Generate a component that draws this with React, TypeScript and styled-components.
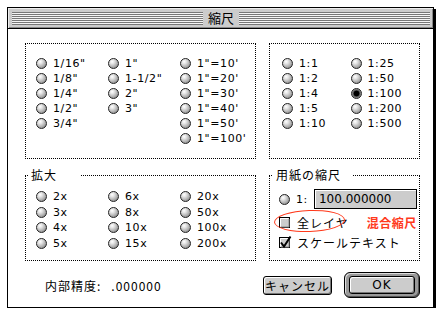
import styled, { createGlobalStyle } from "styled-components";

const GlobalStyle = createGlobalStyle`
  body {
    margin: 0;
    background: #fff;
  }
`;

const LATIN = `"DejaVu Sans", "Noto Sans CJK JP", sans-serif`;
const JP = `"Noto Sans CJK JP", sans-serif`;

const Page = styled.div`
  padding: 7px 0 0 7px;
`;

// the dialog window, black frame with a drop shadow
const Window = styled.div`
  box-sizing: border-box;
  width: 427px;
  height: 301px;
  border: 1px solid #000;
  box-shadow: 2px 2px 0 #000;
  background: #fff;
  display: flex;
  flex-direction: column;
`;

const TitleBar = styled.div`
  box-sizing: border-box;
  height: 21px;
  background: #cccccc;
  border-bottom: 1px solid #000;
  box-shadow: inset 1px 1px 0 #eee, inset -1px -1px 0 #888;
  display: flex;
  align-items: center;
  padding: 0 3px 0 4px;
`;

const Stripes = styled.div`
  flex: 1;
  height: 13px;
  background: repeating-linear-gradient(to bottom, #777 0 1px, #f4f4f4 1px 2px);
`;

const Title = styled.div`
  padding: 0 5px;
  font: 13px/20px ${JP};
  color: #000;
`;

const Body = styled.div`
  flex: 1;
  display: flex;
  flex-direction: column;
  padding: 14px 13px 0 17px;
`;

const Row = styled.div<{ $h: number; $mt?: number }>`
  display: flex;
  gap: 13px;
  height: ${p => p.$h}px;
  margin-top: ${p => p.$mt ?? 0}px;
`;

const Group = styled.div<{ $w: number; $pt: number; $pl: number }>`
  box-sizing: border-box;
  position: relative;
  width: ${p => p.$w}px;
  height: 100%;
  border: 1px dotted #000;
  padding: ${p => p.$pt}px 0 0 ${p => p.$pl}px;
`;

// group title sitting over the dotted frame
const Legend = styled.div<{ $w: number; $pl: number }>`
  position: absolute;
  top: -9px;
  left: 3px;
  width: ${p => p.$w}px;
  padding-left: ${p => p.$pl}px;
  box-sizing: border-box;
  background: #fff;
  font: 12px/16px ${JP};
  letter-spacing: 1px;
`;

const Columns = styled.div`
  display: flex;
`;

const Column = styled.div`
  display: flex;
  flex-direction: column;
  width: 72px;
`;

const Item = styled.div<{ $h?: number }>`
  display: flex;
  align-items: center;
  gap: 6px;
  height: ${p => p.$h ?? 15}px;
  font: 11px ${LATIN};
  letter-spacing: 0.6px;
  color: #000;
  white-space: nowrap;
`;

const Radio = styled.span<{ $on?: boolean }>`
  box-sizing: border-box;
  flex: none;
  width: 11px;
  height: 11px;
  border-radius: 50%;
  border: 1px solid #222;
  background: ${p =>
    p.$on
      ? "radial-gradient(circle at 50% 50%, #000 0 2.6px, #555 3.2px, #aaa 5px)"
      : "radial-gradient(circle at 35% 30%, #fff 0, #e4e4e4 25%, #a8a8a8 65%, #6a6a6a 100%)"};
`;

const PaperRow = styled.div`
  display: flex;
  align-items: center;
  height: 20px;
  font: 11px ${LATIN};
  letter-spacing: 0.6px;
`;

const Field = styled.div`
  box-sizing: border-box;
  width: 103px;
  height: 20px;
  margin-left: 6px;
  border: 1px solid #000;
  box-shadow: inset 1px 1px 0 #fff;
  background: #cccccc;
  padding-left: 4px;
  font: 12px/18px ${LATIN};
  letter-spacing: 0;
`;

const CheckRow = styled.div<{ $mt: number }>`
  position: relative;
  display: flex;
  align-items: center;
  gap: 6px;
  height: 15px;
  margin-top: ${p => p.$mt}px;
`;

const Label = styled.span`
  font: 12px/15px ${JP};
  letter-spacing: 1px;
  white-space: nowrap;
`;

const Note = styled.span`
  margin-left: 12px;
  font: bold 12px/15px ${JP};
  letter-spacing: 0.5px;
  color: #ff3a1c;
`;

// hand-drawn red ring over the checkbox
const Ring = styled.div`
  position: absolute;
  left: -5px;
  top: -5px;
  width: 69px;
  height: 20px;
  border: 1.5px solid #ff3a1c;
  border-radius: 50%;
  transform: rotate(-2deg);
`;

const Bottom = styled.div`
  display: flex;
  align-items: center;
  height: 26px;
  margin-top: 11px;
`;

const Info = styled.span<{ $ml: number }>`
  margin-left: ${p => p.$ml}px;
  font: 12px ${JP};
  letter-spacing: 1px;
`;

const Buttons = styled.div`
  display: flex;
  align-items: center;
  gap: 12px;
  margin-left: auto;
`;

const Button = styled.div<{ $w: number; $latin?: boolean }>`
  box-sizing: border-box;
  width: ${p => p.$w}px;
  height: 19px;
  border: 1px solid #000;
  border-radius: 3px;
  background: #cccccc;
  box-shadow: inset 1px 1px 0 #fff, inset -1px -1px 0 #777;
  display: flex;
  align-items: center;
  justify-content: center;
  font: 12px/17px ${p => (p.$latin ? LATIN : JP)};
  letter-spacing: 1px;
`;

const DefaultRing = styled.div`
  box-sizing: border-box;
  width: 76px;
  height: 26px;
  border: 1px solid #000;
  border-radius: 6px;
  padding: 3px 4px;
  background: #999;
  box-shadow: inset 1px 1px 0 #ddd, inset -1px -1px 0 #555;
  display: flex;
`;

const Box = ({ checked }: { checked?: boolean }) => (
  <svg width="13" height="13" viewBox="0 0 13 13" style={{ flex: "none", overflow: "visible", marginLeft: -1 }}>
    <rect x="1.5" y="1.5" width="10" height="10" fill="#ccc" stroke="#000" />
    <path d="M2.5 10.5V2.5H10.5" fill="none" stroke="#fff" />
    <path d="M3 11H11V3" fill="none" stroke="#888" />
    {checked && (
      <path d="M3 6.5L6 10.5L12.5 0.5" fill="none" stroke="#000" strokeWidth="2" strokeLinejoin="miter" />
    )}
  </svg>
);

const scaleCols = [
  [`1/16"`, `1/8"`, `1/4"`, `1/2"`, `3/4"`],
  [`1"`, `1-1/2"`, `2"`, `3"`],
  [`1"=10'`, `1"=20'`, `1"=30'`, `1"=40'`, `1"=50'`, `1"=100'`],
];

const ratioCols = [
  ["1:1", "1:2", "1:4", "1:5", "1:10"],
  ["1:25", "1:50", "1:100", "1:200", "1:500"],
];

const zoomCols = [
  ["2x", "3x", "4x", "5x"],
  ["6x", "8x", "10x", "15x"],
  ["20x", "50x", "100x", "200x"],
];

function RadioColumns({ cols, selected, h }: { cols: string[][]; selected?: string; h?: number }) {
  return (
    <Columns>
      {cols.map((col, i) => (
        <Column key={i}>
          {col.map(t => (
            <Item key={t} $h={h}>
              <Radio $on={t === selected} />
              {t}
            </Item>
          ))}
        </Column>
      ))}
    </Columns>
  );
}

export default function App() {
  return (
    <Page>
      <GlobalStyle />
      <Window>
        <TitleBar>
          <Stripes />
          <Title>縮尺</Title>
          <Stripes />
        </TitleBar>
        <Body>
          <Row $h={116}>
            <Group $w={231} $pt={12} $pl={10}>
              <RadioColumns cols={scaleCols} />
            </Group>
            <Group $w={151} $pt={12} $pl={12}>
              <RadioColumns cols={ratioCols} selected="1:100" />
            </Group>
          </Row>
          <Row $h={86} $mt={16}>
            <Group $w={231} $pt={13} $pl={10}>
              <Legend $w={52} $pl={2}>拡大</Legend>
              <RadioColumns cols={zoomCols} h={15.5} />
            </Group>
            <Group $w={151} $pt={13} $pl={9}>
              <Legend $w={80} $pl={3}>用紙の縮尺</Legend>
              <PaperRow>
                <Radio />
                <span style={{ marginLeft: 6 }}>1:</span>
                <Field>100.000000</Field>
              </PaperRow>
              <CheckRow $mt={6}>
                <Ring />
                <Box />
                <Label>全レイヤ</Label>
                <Note>混合縮尺</Note>
              </CheckRow>
              <CheckRow $mt={5}>
                <Box checked />
                <Label>スケールテキスト</Label>
              </CheckRow>
            </Group>
          </Row>
          <Bottom>
            <Info $ml={20}>内部精度:</Info>
            <Info $ml={10}>.000000</Info>
            <Buttons>
              <Button $w={69}>キャンセル</Button>
              <DefaultRing>
                <Button $w={66} $latin style={{ height: "100%" }}>OK</Button>
              </DefaultRing>
            </Buttons>
          </Bottom>
        </Body>
      </Window>
    </Page>
  );
}
